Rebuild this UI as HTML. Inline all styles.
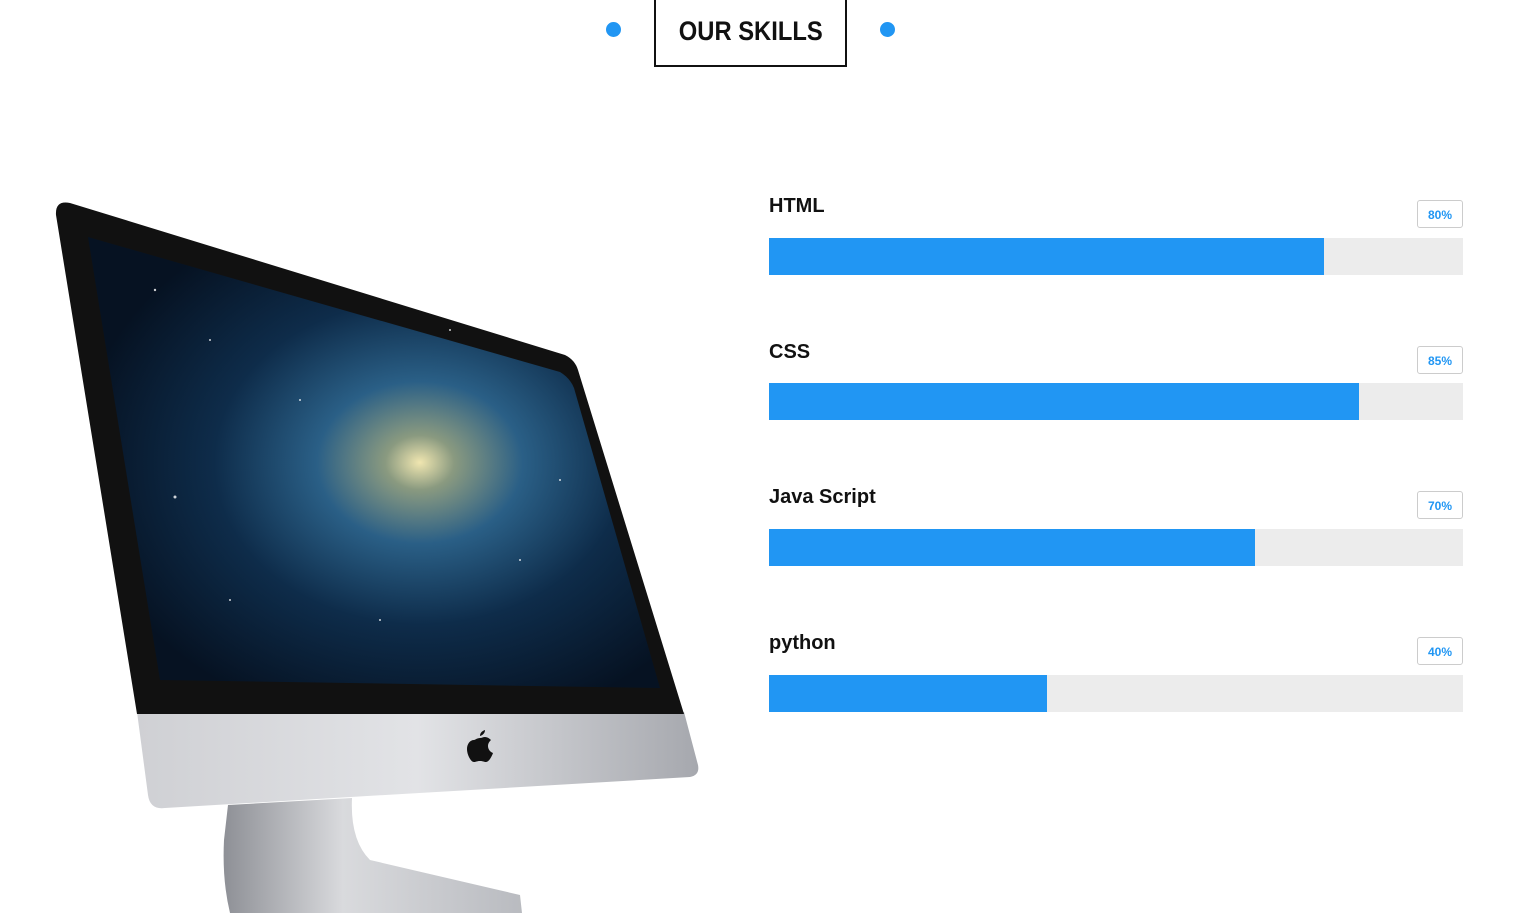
<!DOCTYPE html>
<html><head><meta charset="utf-8"><style>
body{margin:0;width:1534px;height:913px;background:#fff;overflow:hidden;position:relative;font-family:"Liberation Sans",sans-serif}
.dot{position:absolute;width:15px;height:15px;border-radius:50%;background:#2196f3;top:22px}
.title{position:absolute;left:654px;top:-3px;width:189px;height:66px;border:2px solid #111;box-sizing:content-box;text-align:center;line-height:64px;font-weight:bold;font-size:27px;color:#111}
.title span{display:inline-block;transform:scaleX(0.88)}
.sk{position:absolute;left:769px;width:694px}
.sk .n{position:absolute;left:0;top:-5px;font-size:20px;font-weight:bold;color:#111}
.sk .b{position:absolute;right:0;top:0;width:44px;height:26px;border:1px solid #ccc;border-radius:3px;color:#2196f3;font-size:12px;font-weight:bold;text-align:center;line-height:28px}
.sk .t{position:absolute;left:0;top:38px;width:694px;height:37px;background:#ececec}
.sk .f{height:37px;background:#2196f3}
</style></head><body>
<div class="dot" style="left:606px"></div>
<div class="dot" style="left:880px"></div>
<div class="title"><span>OUR SKILLS</span></div>

<div class="sk" style="top:200px"><div class="n">HTML</div><div class="b">80%</div><div class="t"><div class="f" style="width:555px"></div></div></div>
<div class="sk" style="top:346px"><div class="n">CSS</div><div class="b">85%</div><div class="t" style="top:37px"><div class="f" style="width:590px"></div></div></div>
<div class="sk" style="top:491px"><div class="n">Java Script</div><div class="b">70%</div><div class="t"><div class="f" style="width:486px"></div></div></div>
<div class="sk" style="top:637px"><div class="n">python</div><div class="b">40%</div><div class="t"><div class="f" style="width:278px"></div></div></div>

<svg style="position:absolute;left:0;top:0" width="740" height="913">
<defs>
<linearGradient id="sil" x1="0" y1="0" x2="1" y2="0"><stop offset="0" stop-color="#cfd0d4"/><stop offset="0.5" stop-color="#e2e3e6"/><stop offset="1" stop-color="#a6a8ae"/></linearGradient>
<linearGradient id="st" x1="0" y1="0" x2="1" y2="0"><stop offset="0" stop-color="#8e9096"/><stop offset="0.4" stop-color="#d9dadd"/><stop offset="1" stop-color="#b9bbc0"/></linearGradient>
<radialGradient id="sky" cx="0.58" cy="0.5" r="0.6"><stop offset="0" stop-color="#f0e6b0"/><stop offset="0.1" stop-color="#8a9a80"/><stop offset="0.3" stop-color="#2a5f86"/><stop offset="0.6" stop-color="#0e2c4a"/><stop offset="1" stop-color="#061222"/></radialGradient>
</defs>
<path d="M228,805 L352,798 Q350,840 370,860 L520,895 L522,913 L230,913 Q222,880 224,840 Z" fill="url(#st)"/>
<path d="M137,712 L684,712 L698,765 Q700,775 690,777 L165,808 Q150,810 148,795 Z" fill="url(#sil)"/>
<path d="M56,215 Q55,200 70,203 L565,355 Q575,360 578,370 L684,714 L137,714 Z" fill="#111"/>
<path d="M88,237 L560,372 Q570,378 574,388 L660,688 L160,680 Z" fill="url(#sky)"/>
<g fill="#fff" opacity="0.8"><circle cx="155" cy="290" r="1.2"/><circle cx="175" cy="497" r="1.5"/><circle cx="300" cy="400" r="1"/><circle cx="520" cy="560" r="1"/><circle cx="230" cy="600" r="1"/><circle cx="450" cy="330" r="1"/><circle cx="560" cy="480" r="1"/><circle cx="210" cy="340" r="1"/><circle cx="380" cy="620" r="1"/></g>
<path d="M480,738 c-3,0 -5,2 -6,2 c-4,0 -7,4 -7,9 c0,6 4,13 7,13 c2,0 3,-1 6,-1 c3,0 4,1 6,1 c3,0 6,-6 7,-9 c-3,-1 -5,-4 -5,-7 c0,-3 2,-5 3,-6 c-2,-2 -4,-3 -6,-3 c-2,0 -3,1 -5,1 Z M480,736 c0,-3 2,-5 5,-6 c0,3 -2,5 -5,6 Z" fill="#111"/>
</svg>
</body></html>
